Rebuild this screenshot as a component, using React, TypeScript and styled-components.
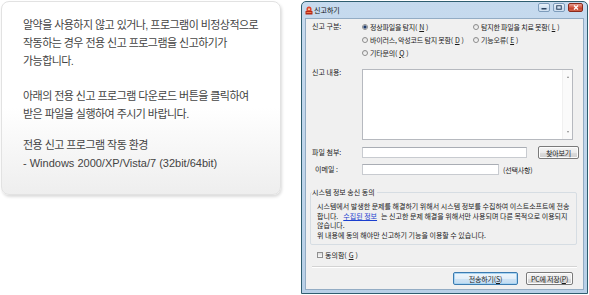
import { FC } from 'react';
import styled, { createGlobalStyle } from 'styled-components';

const GlobalStyle = createGlobalStyle`
    html, body {
        margin: 0;
        padding: 0;
        background: #fff;
    }
    body {
        font-family: "Liberation Sans", "Noto Sans CJK KR", sans-serif;
    }
`;

const Page = styled.div`
    display: flex;
    align-items: flex-start;
    gap: 20px;
    width: 589px;
    height: 295px;
    padding: 1px 0 0 1px;
    box-sizing: border-box;
    overflow: hidden;
`;

/* ---------- left info card ---------- */

const InfoCard = styled.div`
    width: 280px;
    height: 194px;
    flex-shrink: 0;
    box-sizing: border-box;
    padding: 14px 0 0 21px;
    border: 1px solid #e2e2e2;
    border-radius: 8px;
    background: linear-gradient(#fff 0%, #fff 55%, #eeeeee 100%);
    box-shadow: 1px 2px 3px rgba(0, 0, 0, 0.14);
    color: #444;
    font-size: 11px;
    line-height: 18px;
`;

const Para = styled.p<{ $gap?: number }>`
    margin: 0 0 ${(p) => p.$gap ?? 0}px;
    letter-spacing: -0.55px;
    white-space: nowrap;
`;

const Latin = styled.span`
    letter-spacing: 0;
`;

/* ---------- report window ---------- */

const Window = styled.div`
    width: 287px;
    height: 293px;
    flex-shrink: 0;
    box-sizing: border-box;
    display: flex;
    flex-direction: column;
    padding: 0 3px 3px;
    border: 1px solid #2f5e70;
    border-radius: 5px 5px 0 0;
    background: linear-gradient(#c6daee, #b8d0e7);
    font-family: "Noto Sans CJK KR", sans-serif;
    font-size: 7px;
    color: #1a1a1a;
`;

const TitleBar = styled.div`
    height: 16px;
    display: flex;
    align-items: flex-start;
`;

const TitleIcon = styled.svg`
    margin-top: 4px;
    flex-shrink: 0;
`;

const TitleText = styled.span`
    margin-left: 1px;
    line-height: 16px;
    color: #111;
`;

const Controls = styled.div`
    margin: 1px 1px 0 auto;
    display: flex;
    gap: 3px;
`;

const ControlButton = styled.div<{ $close?: boolean }>`
    width: ${(p) => (p.$close ? 15 : 12)}px;
    height: 9px;
    box-sizing: border-box;
    display: flex;
    align-items: center;
    justify-content: center;
    border: 1px solid ${(p) => (p.$close ? '#8a2a1c' : '#7d9cbb')};
    border-radius: 2px;
    background: ${(p) =>
        p.$close
            ? 'linear-gradient(#e6a093, #d2553f 50%, #c23a24 51%, #d1654d)'
            : 'linear-gradient(#e9f1f9, #d3e2f1 50%, #c3d6ea 51%, #d4e3f2)'};
`;

const Body = styled.div`
    flex: 1;
    display: flex;
    flex-direction: column;
    padding: 1px 6px 3px;
    border: 1px solid #93acc4;
    background: #f0f0f0;
`;

const FormRow = styled.div<{ $mt?: number; $top?: boolean }>`
    display: grid;
    grid-template-columns: 50px 1fr;
    align-items: ${(p) => (p.$top ? 'start' : 'center')};
    margin-top: ${(p) => p.$mt ?? 0}px;
`;

const Label = styled.span<{ $indent?: number; $shift?: number }>`
    padding-left: ${(p) => p.$indent ?? 0}px;
    margin-top: ${(p) => p.$shift ?? 0}px;
    line-height: 13px;
    white-space: nowrap;
`;

const RadioGrid = styled.div`
    display: grid;
    grid-template-columns: 111px auto;
    grid-auto-rows: 13px;
`;

const RadioItem = styled.label`
    display: flex;
    align-items: center;
    gap: 2px;
    white-space: nowrap;
    letter-spacing: -0.2px;
`;

const RadioDot = styled.span<{ $checked?: boolean }>`
    width: 6px;
    height: 6px;
    box-sizing: border-box;
    border-radius: 50%;
    border: 1px solid #8c8c8c;
    background: ${(p) =>
        p.$checked
            ? 'radial-gradient(circle, #1d3a6b 0 1.4px, #e8eef5 1.8px)'
            : 'linear-gradient(#e2e2e2, #fafafa)'};
`;

const Key = styled.span`
    text-decoration: underline;
`;

const TextBox = styled.div`
    width: 211px;
    height: 71px;
    box-sizing: border-box;
    display: flex;
    justify-content: flex-end;
    border: 1px solid #b6b9bf;
    background: #fff;
`;

const ScrollTrack = styled.div`
    width: 9px;
    display: flex;
    flex-direction: column;
    align-items: center;
    justify-content: space-between;
    padding: 6px 0;
    border-left: 1px solid #f0f0f0;
    background: #fafafa;
`;

const Arrow = styled.span<{ $down?: boolean }>`
    width: 0;
    height: 0;
    border-left: 1.5px solid transparent;
    border-right: 1.5px solid transparent;
    ${(p) => (p.$down ? 'border-top' : 'border-bottom')}: 2px solid #8a8a8a;
`;

const Field = styled.div`
    display: flex;
    align-items: center;
`;

const Input = styled.div<{ $w: number }>`
    width: ${(p) => p.$w}px;
    height: 11px;
    box-sizing: border-box;
    border: 1px solid #c8cbd0;
    border-top-color: #a9adb4;
    background: #fff;
`;

const Hint = styled.span`
    margin-left: 4px;
    letter-spacing: -0.2px;
`;

const Button = styled.div<{ $w: number; $primary?: boolean }>`
    width: ${(p) => p.$w}px;
    height: 13px;
    box-sizing: border-box;
    display: flex;
    align-items: center;
    justify-content: center;
    border: 1px solid ${(p) => (p.$primary ? '#3b7bb0' : '#7a7a7a')};
    border-radius: 2px;
    background: ${(p) =>
        p.$primary
            ? 'linear-gradient(#eef6fc, #e3eff9 50%, #cfe4f5 51%, #c2dbf0)'
            : 'linear-gradient(#f4f4f4, #ebebeb 50%, #dddddd 51%, #d0d0d0)'};
    box-shadow: ${(p) => (p.$primary ? 'inset 0 0 0 1px #a9d4f2' : 'inset 0 0 0 1px #fcfcfc')};
    white-space: nowrap;
    letter-spacing: -0.2px;
`;

const Group = styled.fieldset`
    margin: 11px 0 0 -2px;
    padding: 5px 0 4px 6px;
    min-width: 0;
    border: 1px solid #d6dde3;
    border-radius: 2px;
`;

const GroupTitle = styled.legend`
    margin-left: -5px;
    padding: 0 2px 0 0;
    line-height: 10px;
    white-space: nowrap;
`;

const Notice = styled.div`
    line-height: 9.5px;
    letter-spacing: 0;
    white-space: nowrap;
`;

const InfoLink = styled.a`
    margin: 0 4px 0 5px;
    color: #1b3fcf;
    text-decoration: underline;
`;

const CheckRow = styled.label`
    margin-top: 5px;
    padding-left: 5px;
    height: 10px;
    display: flex;
    align-items: center;
    gap: 2px;
`;

const CheckBox = styled.span`
    width: 6px;
    height: 6px;
    box-sizing: border-box;
    border: 1px solid #8f8f8f;
    background: linear-gradient(#dedede, #fbfbfb);
`;

const Separator = styled.div`
    margin-top: 6px;
    border-top: 1px solid #d3d3d3;
    border-bottom: 1px solid #fff;
`;

const ButtonRow = styled.div`
    margin-top: 4px;
    padding-right: 4px;
    display: flex;
    justify-content: flex-end;
    gap: 8px;
`;

const AppIcon: FC = () => (
    <TitleIcon width="8" height="9" viewBox="0 0 8 9">
        <path d="M1.5 5 V3 A2.5 2.5 0 0 1 6.5 3 V5 Z" fill="#e0452d" />
        <circle cx="4" cy="3.2" r="1" fill="#ffd9a8" />
        <rect x="0.5" y="5" width="7" height="3.5" rx="0.5" fill="#b52a17" />
        <rect x="1.5" y="6" width="5" height="1" fill="#f07a4f" />
    </TitleIcon>
);

const WindowControls: FC = () => (
    <Controls>
        <ControlButton>
            <svg width="6" height="5" viewBox="0 0 6 5">
                <rect x="0.5" y="3" width="5" height="1.5" fill="#2c4460" />
            </svg>
        </ControlButton>
        <ControlButton>
            <svg width="6" height="5" viewBox="0 0 6 5">
                <rect x="0.75" y="0.75" width="4.5" height="3.5" fill="none" stroke="#2c4460" strokeWidth="1" />
            </svg>
        </ControlButton>
        <ControlButton $close>
            <svg width="6" height="5" viewBox="0 0 6 5">
                <path d="M1 0.5 L5 4.5 M5 0.5 L1 4.5" stroke="#fff" strokeWidth="1.3" />
            </svg>
        </ControlButton>
    </Controls>
);

const App: FC = () => (
    <>
        <GlobalStyle />
        <Page>
            <InfoCard>
                <Para>알약을 사용하지 않고 있거나, 프로그램이 비정상적으로</Para>
                <Para>작동하는 경우 전용 신고 프로그램을 신고하기가</Para>
                <Para $gap={17}>가능합니다.</Para>
                <Para>아래의 전용 신고 프로그램 다운로드 버튼을 클릭하여</Para>
                <Para $gap={13}>받은 파일을 실행하여 주시기 바랍니다.</Para>
                <Para>전용 신고 프로그램 작동 환경</Para>
                <Para>
                    <Latin>- Windows 2000/XP/Vista/7 (32bit/64bit)</Latin>
                </Para>
            </InfoCard>

            <Window>
                <TitleBar>
                    <AppIcon />
                    <TitleText>신고하기</TitleText>
                    <WindowControls />
                </TitleBar>

                <Body>
                    <FormRow $top>
                        <Label>신고 구분:</Label>
                        <RadioGrid>
                            <RadioItem>
                                <RadioDot $checked />
                                정상파일을 탐지(<Key>N</Key>)
                            </RadioItem>
                            <RadioItem>
                                <RadioDot />
                                탐지한 파일을 치료 못함(<Key>L</Key>)
                            </RadioItem>
                            <RadioItem>
                                <RadioDot />
                                바이러스, 악성코드 탐지 못함(<Key>D</Key>)
                            </RadioItem>
                            <RadioItem>
                                <RadioDot />
                                기능오류(<Key>E</Key>)
                            </RadioItem>
                            <RadioItem>
                                <RadioDot />
                                기타문의(<Key>Q</Key>)
                            </RadioItem>
                        </RadioGrid>
                    </FormRow>

                    <FormRow $top $mt={10}>
                        <Label $shift={-3}>신고 내용:</Label>
                        <TextBox>
                            <ScrollTrack>
                                <Arrow />
                                <Arrow $down />
                            </ScrollTrack>
                        </TextBox>
                    </FormRow>

                    <FormRow $mt={6}>
                        <Label>파일 첨부:</Label>
                        <Field>
                            <Input $w={165} />
                            <Button $w={41} style={{ marginLeft: 11 }}>찾아보기</Button>
                        </Field>
                    </FormRow>

                    <FormRow $mt={4}>
                        <Label $indent={3}>이메일 :</Label>
                        <Field>
                            <Input $w={137} />
                            <Hint>(선택사항)</Hint>
                        </Field>
                    </FormRow>

                    <Group>
                        <GroupTitle>시스템 정보 송신 동의</GroupTitle>
                        <Notice>시스템에서 발생한 문제를 해결하기 위해서 시스템 정보를 수집하여 이스트소프트에 전송</Notice>
                        <Notice>
                            합니다.<InfoLink>수집된 정보</InfoLink>는 신고한 문제 해결을 위해서만 사용되며 다른 목적으로 이용되지
                        </Notice>
                        <Notice>않습니다.</Notice>
                        <Notice>위 내용에 동의 해야만 신고하기 기능을 이용할 수 있습니다.</Notice>
                    </Group>

                    <CheckRow>
                        <CheckBox />
                        동의함(<Key>G</Key>)
                    </CheckRow>

                    <Separator />

                    <ButtonRow>
                        <Button $w={65} $primary>전송하기(<Key>S</Key>)</Button>
                        <Button $w={47}>PC에 저장(<Key>P</Key>)</Button>
                    </ButtonRow>
                </Body>
            </Window>
        </Page>
    </>
);

export default App;
